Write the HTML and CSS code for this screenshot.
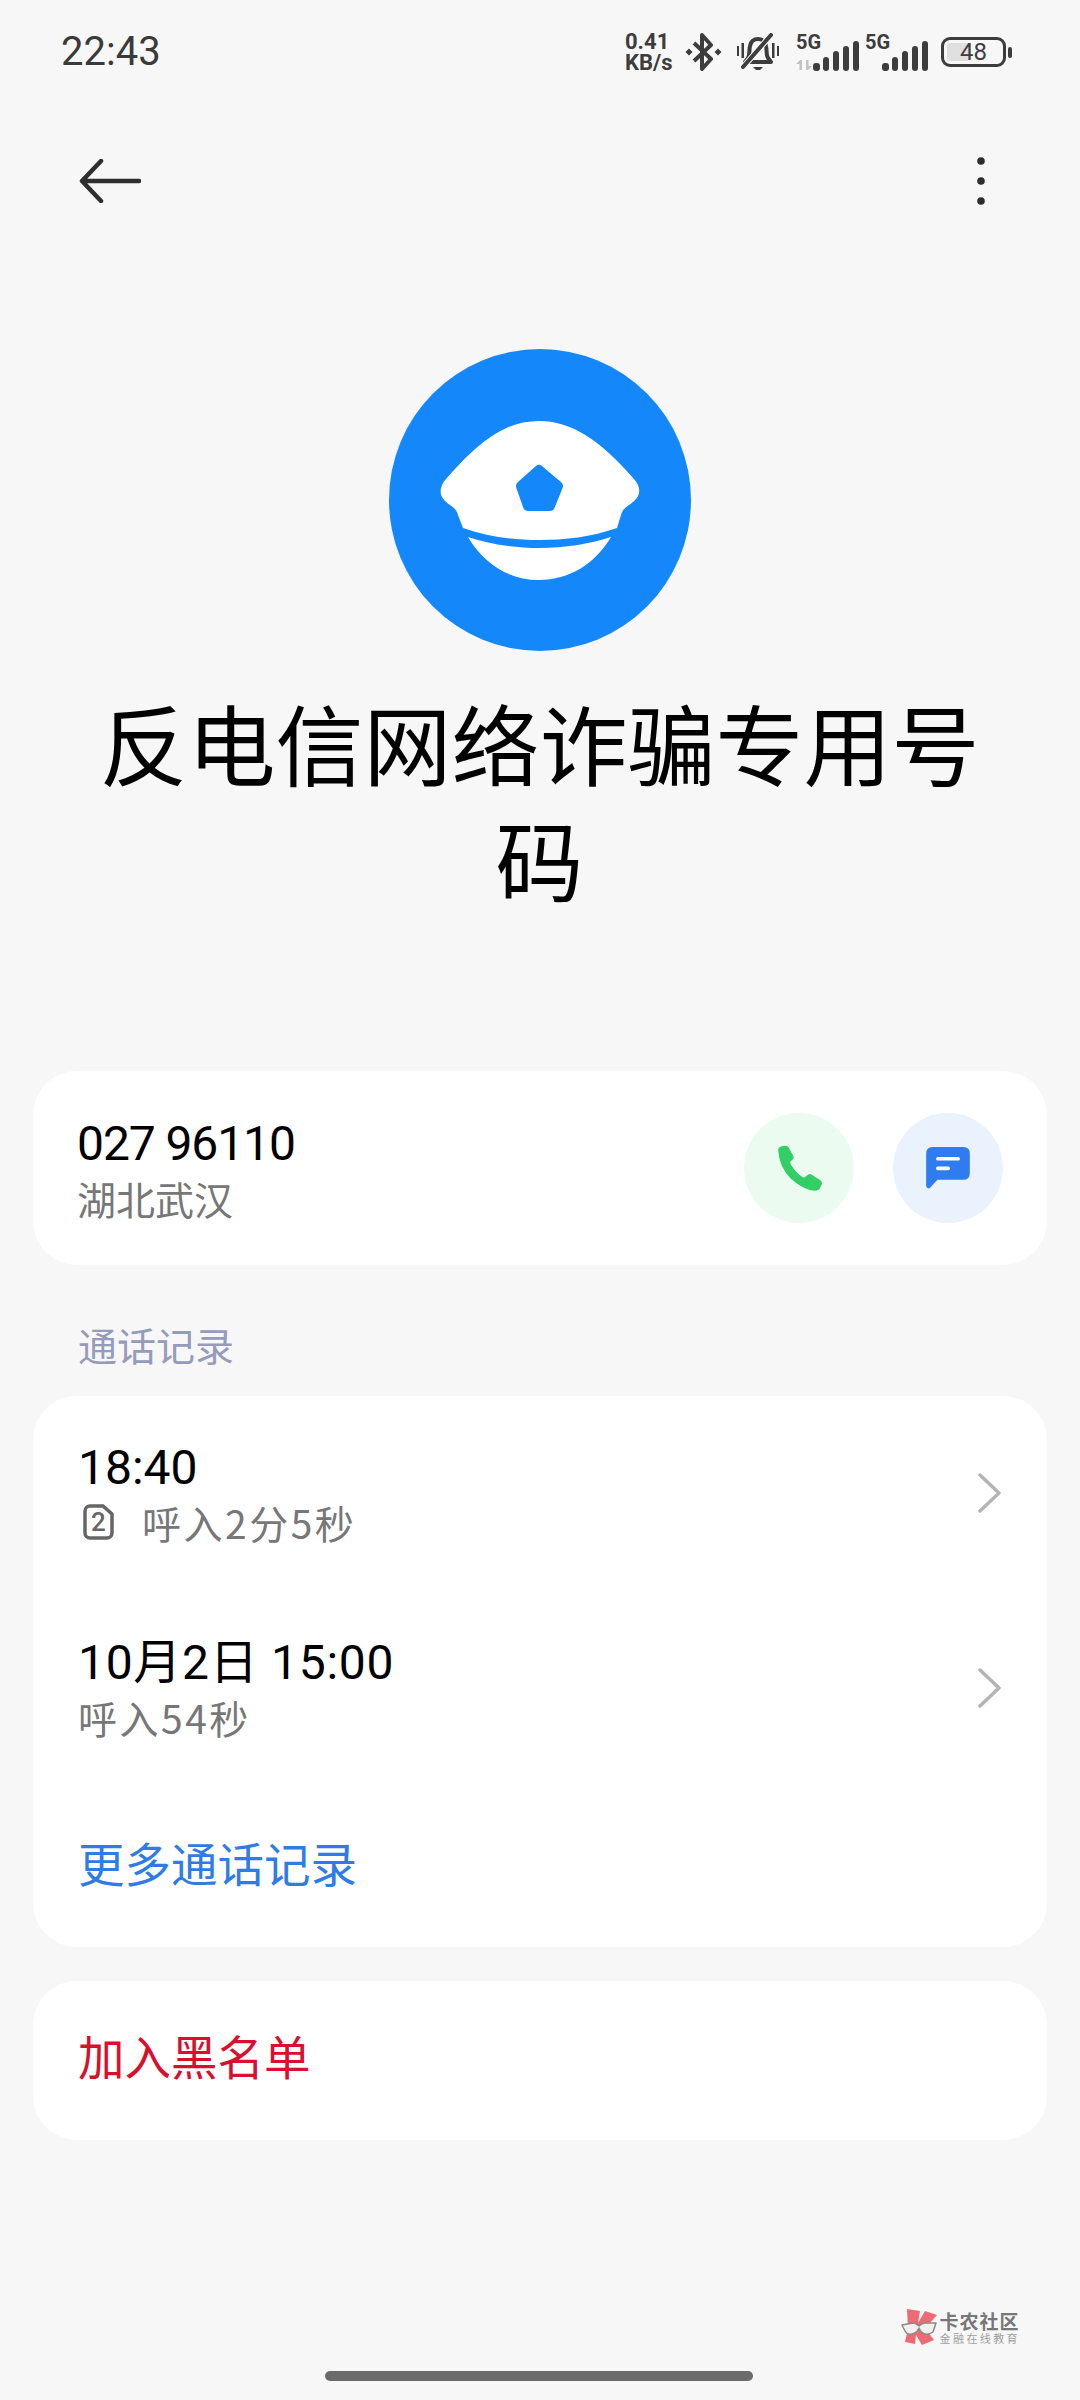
FILE: index.html
```html
<!DOCTYPE html>
<html lang="zh-CN">
<head>
<meta charset="utf-8">
<title>反电信网络诈骗专用号码</title>
<link rel="stylesheet" href="styles.css">
</head>
<body>
<div class="screen">
  <header class="status">
    <span class="clock">22:43</span>
    <div class="status-icons">
      <span class="speed"><span>0.41</span><span>KB/s</span></span>
      <svg class="ic-bt" viewBox="0 0 37 38"><path d="M9 10 26 26 17 36V2l9 10L9 28" fill="none" stroke="#3d3d3d" stroke-width="4" stroke-linejoin="round"/><path d="M4 15.500 7.500 19 4 22.500 .5 19zM33 15.500 36.500 19 33 22.500 29.500 19z" fill="#3d3d3d"/></svg>
      <svg class="ic-bell" viewBox="0 0 44 38"><path d="M9 29h26l-3-4c-2-3-1-8-2-12C29 8 26 6 22 6s-7 2-8 7c-1 4 0 9-2 12z" fill="none" stroke="#3d3d3d" stroke-width="4" stroke-linejoin="round"/><path d="M8 33 35 2" stroke="#f7f7f7" stroke-width="6"/><path d="M7 34 35 2" stroke="#3d3d3d" stroke-width="4" stroke-linecap="round"/><path d="M17 34h10l-3 3h-4zM1 13h2v10H1zM5.500 10h2.500v15H5.500zM36 10h2.500v15H36zM41 13h2v10h-2z" fill="#3d3d3d"/></svg>
      <div class="net">
        <span class="five-g">5G</span>
        <svg class="ic-arrows" viewBox="0 0 16 12"><path d="M0 5 4 1H6V11H3.500V5zM16 7 12 11H10V1H12.500V7z" fill="#c3c3c3"/></svg>
        <svg class="ic-signal" viewBox="0 0 46 30"><rect x="0" y="22" width="7" height="8" rx="3" fill="#3d3d3d"/><rect x="10" y="16" width="6" height="14" rx="3" fill="#3d3d3d"/><rect x="20" y="10" width="6" height="20" rx="3" fill="#3d3d3d"/><rect x="30" y="5" width="6" height="25" rx="3" fill="#3d3d3d"/><rect x="40" y="0" width="6" height="30" rx="3" fill="#3d3d3d"/></svg>
      </div>
      <div class="net net-two">
        <span class="five-g">5G</span>
        <svg class="ic-signal" viewBox="0 0 46 30"><rect x="0" y="22" width="7" height="8" rx="3" fill="#3d3d3d"/><rect x="10" y="16" width="6" height="14" rx="3" fill="#3d3d3d"/><rect x="20" y="10" width="6" height="20" rx="3" fill="#3d3d3d"/><rect x="30" y="5" width="6" height="25" rx="3" fill="#3d3d3d"/><rect x="40" y="0" width="6" height="30" rx="3" fill="#3d3d3d"/></svg>
      </div>
      <div class="battery"><span class="battery-fill"></span><span class="battery-num">48</span></div>
      <span class="battery-nub"></span>
    </div>
  </header>

  <nav class="toolbar">
    <svg class="ic-back" viewBox="0 0 62 44"><path d="M22 2 3 22 22 42M4 22H60" fill="none" stroke="#2e2e2e" stroke-width="4.500" stroke-linecap="round" stroke-linejoin="round"/></svg>
    <svg class="ic-more" viewBox="0 0 8 48"><circle cx="4" cy="4" r="3.800" fill="#2e2e2e"/><circle cx="4" cy="24" r="3.800" fill="#2e2e2e"/><circle cx="4" cy="44" r="3.800" fill="#2e2e2e"/></svg>
  </nav>

  <section class="hero">
    <svg class="avatar" viewBox="0 0 302 302">
      <circle cx="151" cy="151" r="151" fill="#1487fb"/>
      <path d="M150 72C118 72 92 90 57 130 50 138 50 146 56 152 61 157 67 158 69 166L74 179C100 188 125 191 150 191 176 191 202 188 228 179L232 166C234 158 240 157 245 152 252 146 252 138 245 130 210 90 182 72 150 72Z" fill="#fff"/>
      <path d="M79 188C100 195 125 199 150 199 176 199 200 195 222 188 206 215 180 231 150 231 120 231 95 215 79 188Z" fill="#fff"/>
      <path d="M150 121 169 137 161 157H139L132 137Z" fill="#1487fb" stroke="#1487fb" stroke-width="10" stroke-linejoin="round"/>
    </svg>
    <h1 class="name">反电信网络诈骗专用号码</h1>
  </section>

  <section class="card card-contact">
    <div class="contact-text">
      <div class="primary primary-number">027 96110</div>
      <div class="secondary">湖北武汉</div>
    </div>
    <div class="actions">
      <span class="round round-green">
        <svg class="ic-phone" viewBox="105 103 142 142"><path d="M112 122Q110 110 122 107L135 105Q140 105 143 110L158 138Q160 143 155 147L149 153Q147 157 150 162 165 187 185 200 190 203 194 199L203 192Q207 189 212 192L240 210Q246 214 243 222L238 233Q234 241 222 241 190 240 150 205 115 170 112 122Z" fill="#33cf66"/></svg>
      </span>
      <span class="round round-blue">
        <svg class="ic-msg" viewBox="558 113 132 127"><path d="M578 113H670Q690 113 690 133V192Q690 212 670 212H592L570 236Q562 242 558 232V133Q558 113 578 113Z" fill="#2f7cf0"/><rect x="588" y="143" width="72" height="11" rx="5" fill="#fff"/><rect x="588" y="172" width="42" height="11" rx="5" fill="#fff"/></svg>
      </span>
    </div>
  </section>

  <h2 class="section-label">通话记录</h2>

  <section class="card card-log">
    <div class="log-row">
      <div class="log-text">
        <div class="primary">18:40</div>
        <div class="secondary sim-line">
          <svg class="ic-sim" viewBox="0 0 31 36"><path d="M7 2H20L29 10V29A5 5 0 0 1 24 34H7A5 5 0 0 1 2 29V7A5 5 0 0 1 7 2Z" fill="none" stroke="#666" stroke-width="3.500"/></svg>
          <span class="sim-num">2</span>
          <span class="spaced">呼入2分5秒</span>
        </div>
      </div>
      <svg class="ic-chevron" viewBox="0 0 24 40"><path d="M2 2 21 20 2 38" fill="none" stroke="#b4b4b4" stroke-width="3.500" stroke-linecap="round" stroke-linejoin="round"/></svg>
    </div>
    <div class="log-row">
      <div class="log-text">
        <div class="primary primary-date">10月2日 15:00</div>
        <div class="secondary spaced">呼入54秒</div>
      </div>
      <svg class="ic-chevron" viewBox="0 0 24 40"><path d="M2 2 21 20 2 38" fill="none" stroke="#b4b4b4" stroke-width="3.500" stroke-linecap="round" stroke-linejoin="round"/></svg>
    </div>
    <div class="more-link">更多通话记录</div>
  </section>

  <section class="card card-block">加入黑名单</section>

  <div class="watermark">
    <svg class="wm-logo" viewBox="0 0 36 36"><path d="M6 0 19 2 17 14 24 2 36 6 27 16 24 19 33 31 21 36 15 26 14 35 4 33 7 20Z" fill="#ee6a74"/><path d="M1 16 12 14Q15 14 18 17 21 14 24 14H35L32 23Q28 26 24 25 20 24 18 19 16 24 11 25 6 26 4 22Z" fill="#f4f0f0" stroke="#8a8a8a" stroke-width="1.500" stroke-linejoin="round"/></svg>
    <div class="wm-text"><span class="wm-title">卡农社区</span><span class="wm-sub">金融在线教育</span></div>
  </div>

  <footer class="home-area"><span class="home-bar"></span></footer>
</div>
</body>
</html>
```

FILE: styles.css
```css
* { box-sizing: border-box; }
html, body { margin: 0; padding: 0; }
body {
  background: #f7f7f7;
  font-family: "Roboto", "Noto Sans CJK SC", sans-serif;
  color: #000;
}
.screen { width: 1080px; height: 2400px; display: flex; flex-direction: column; overflow: hidden; }

.status { height: 104px; padding: 0 68px 0 61px; display: flex; align-items: center; justify-content: space-between; flex: none; }
.clock { font-size: 40px; color: #3a3a3a; line-height: 1; }
.status-icons { display: flex; align-items: center; }
.speed { display: flex; flex-direction: column; font-size: 22px; font-weight: 700; line-height: 21px; color: #3d3d3d; width: 60px; }
.ic-bt { width: 37px; height: 38px; margin-right: 14px; }
.ic-bell { width: 44px; height: 38px; margin-right: 16px; }
.net { position: relative; width: 63px; height: 38px; margin-right: 6px; }
.net-two { width: 63px; margin-right: 13px; }
.five-g { position: absolute; left: 0; top: 0; font-size: 20px; font-weight: 700; line-height: 18px; color: #3d3d3d; }
.ic-arrows { position: absolute; left: 0; bottom: 0; width: 16px; height: 12px; }
.ic-signal { position: absolute; right: 0; bottom: 0; width: 46px; height: 30px; }
.battery { position: relative; width: 65px; height: 30px; border: 3.500px solid #3d3d3d; border-radius: 9px; display: flex; align-items: center; justify-content: center; }
.battery-fill { position: absolute; left: 3px; top: 3px; bottom: 3px; width: 22px; background: #e0e0e0; border-radius: 2px; }
.battery-num { position: relative; font-size: 24px; color: #3d3d3d; line-height: 1; }
.battery-nub { width: 4px; height: 11px; margin-left: 2px; background: #3d3d3d; border-radius: 2px; }

.toolbar { height: 154px; padding: 0 95px 0 79px; display: flex; align-items: flex-start; justify-content: space-between; flex: none; }
.ic-back { width: 62px; height: 44px; margin-top: 55px; }
.ic-more { width: 8px; height: 48px; margin-top: 53px; }

.hero { display: flex; flex-direction: column; align-items: center; margin-top: 91px; padding-right: 1px; flex: none; }
.avatar { width: 302px; height: 302px; display: block; }
.name { margin: 32px 0 0; width: 890px; font-size: 88px; line-height: 116px; font-weight: 400; text-align: center; font-family: "Noto Sans CJK SC", sans-serif; }

.card { background: #fff; border-radius: 44px; margin: 0 33px; flex: none; }
.card-contact { height: 194px; margin-top: 156px; padding: 0 44px; display: flex; align-items: center; justify-content: space-between; }
.primary { font-size: 48px; line-height: 58px; color: #000; }
.primary-number { letter-spacing: -1.100px; }
.primary-date { letter-spacing: 0.7px; }
.secondary { font-size: 39px; line-height: 50px; color: #777; font-family: "Noto Sans CJK SC", sans-serif; }
.spaced { letter-spacing: 2.500px; }
.contact-text { margin-top: 2px; }
.actions { display: flex; gap: 39px; }
.round { width: 110px; height: 110px; border-radius: 50%; display: flex; align-items: center; justify-content: center; }
.round-green { background: #ecfbf0; }
.round-blue { background: #eaf2fe; }
.ic-phone { width: 47px; height: 47px; }
.ic-msg { width: 44px; height: 42px; }

.section-label { margin: 52px 0 0 78px; height: 79px; font-size: 39px; line-height: 54px; font-weight: 400; color: #959cbb; font-family: "Noto Sans CJK SC", sans-serif; flex: none; }

.card-log { height: 551px; padding-top: 43px; display: flex; flex-direction: column; }
.log-row { height: 195px; padding: 0 45px 0 45px; display: flex; justify-content: space-between; }
.log-text { height: 112px; }
.ic-chevron { width: 24px; height: 40px; margin-top: 34px; }
.sim-line { display: flex; align-items: center; position: relative; }
.ic-sim { width: 31px; height: 36px; margin: 0 28px 0 5px; }
.sim-num { position: absolute; left: 13px; font-size: 26px; line-height: 50px; color: #666; font-family: "Roboto", sans-serif; font-weight: 500; }
.more-link { margin: -2px 0 0 45px; font-size: 46.500px; line-height: 70px; color: #2f7ce6; font-family: "Noto Sans CJK SC", sans-serif; }

.card-block { height: 159px; margin-top: 34px; padding: 0 0 12px 45px; display: flex; align-items: center; font-size: 46.500px; color: #d6102d; font-family: "Noto Sans CJK SC", sans-serif; }

.watermark { display: flex; align-items: center; gap: 3px; margin: 169px 60px 0 auto; height: 36px; flex: none; }
.wm-logo { width: 36px; height: 36px; }
.wm-text { display: flex; flex-direction: column; font-family: "Noto Sans CJK SC", sans-serif; color: #777; }
.wm-title { font-size: 19px; line-height: 21px; font-weight: 700; letter-spacing: 1px; }
.wm-sub { font-size: 11px; line-height: 14px; letter-spacing: 2.400px; color: #a0a0a0; }

.home-area { display: flex; justify-content: center; margin-top: 26px; padding-right: 3px; flex: none; }
.home-bar { width: 428px; height: 10px; border-radius: 5px; background: #6b6b6b; }
```
